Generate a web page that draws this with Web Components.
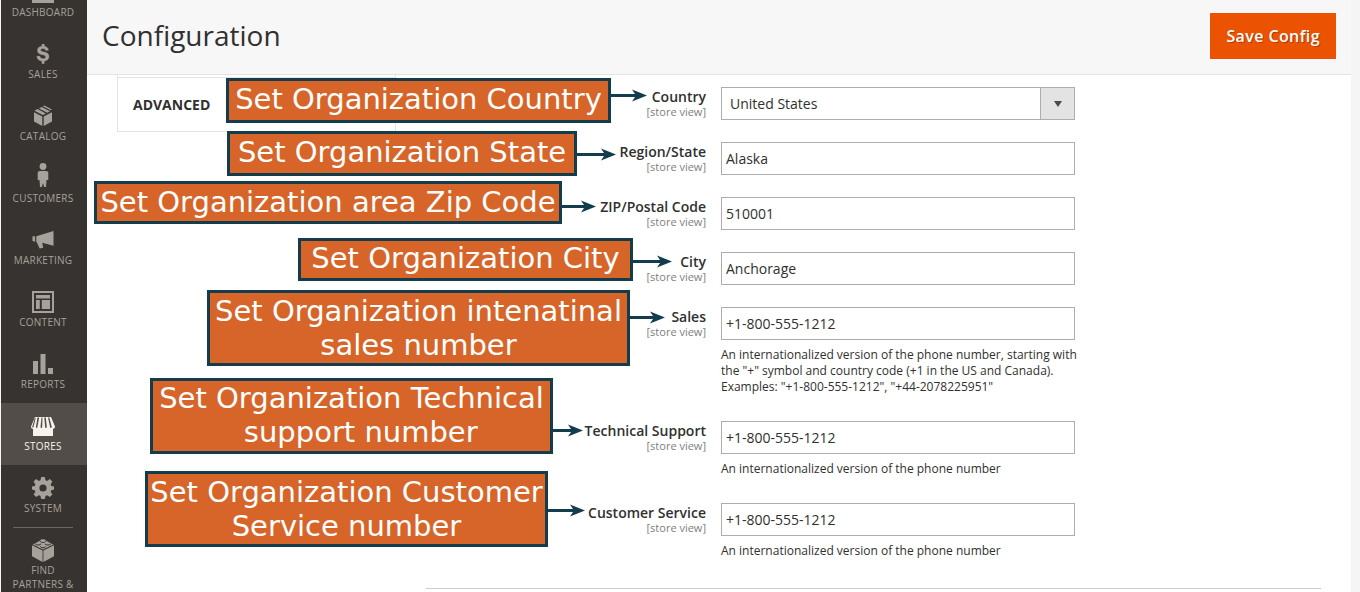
<!DOCTYPE html>
<html lang="en">
<head>
<meta charset="utf-8">
<meta name="viewport" content="width=device-width, initial-scale=1">
<title>Configuration</title>
<style>
  body { margin: 0; height: 100vh; overflow: hidden; background: #f5f5f5; color: #303030; font-family: "Open Sans", sans-serif; font-size: 14px; }
</style>
</head>
<body>
<config-page></config-page>
<script>
const define = (name, html, setup) => {
  const template = document.createElement('template');
  template.innerHTML = html;
  customElements.define(name, class extends HTMLElement {
    connectedCallback() {
      if (this.shadowRoot) return;
      const root = this.attachShadow({ mode: 'open' });
      root.append(template.content.cloneNode(true));
      if (setup) setup(this, root);
    }
  });
};

const icons = {
  dashboard: '<svg width="22" height="22"><path d="M0 0h22v22H0z"/></svg>',
  sales: '<svg width="14" height="20" viewBox="0 0 14 20"><path stroke="currentColor" stroke-width=".5" d="M6 0h2.200v2.300c2.400.3 3.900 1.600 4.200 3.900H9.500C9.200 5 8.400 4.500 7 4.500c-1.500 0-2.400.5-2.400 1.500 0 1.200 1.300 1.500 3.400 2 2.700.7 4.900 1.500 4.900 4.400 0 2.600-1.800 4.200-4.700 4.600v2.500H6V17C3 16.700 1.100 15.200.9 12.300h3c.2 1.700 1.300 2.400 3.200 2.400 1.700 0 2.700-.7 2.700-1.800 0-1.300-1.200-1.700-3.400-2.200C3.600 10 1.500 9.100 1.500 6.400 1.500 4.100 3.200 2.600 6 2.300z"/></svg>',
  catalog: '<svg width="20" height="22" viewBox="0 0 20 22"><path d="M1 7.200l8.300 4.300V21L1 16.500zM10.700 11.500L19 7.200v9.300L10.700 21zM1.500 5.800l3-1.700 8.300 4.300-2.900 1.600zM6 3.400l2.600-1.500 8.400 4.300-2.700 1.500zM9.800 1.300L11.500.4 18.900 4.400l-1.200.9z"/></svg>',
  customers: '<svg width="12" height="30" viewBox="0 0 12 30"><circle cx="6" cy="3.500" r="3.400"/><path d="M3 8h6c1.500 0 2.300.8 2.300 2.200V17H9.500L9 24H7.200L6 20l-1.200 4H3l-.5-7H.7v-6.800C.7 8.800 1.500 8 3 8z"/></svg>',
  marketing: '<svg width="22" height="18" viewBox="0 0 22 18"><path d="M21.500 0v14.800L10.200 11.800l1 5-3.600.8-2.800-6.400H4.300V5.300zM.5 5.200h2.600v5.600L.5 10z"/></svg>',
  content: '<svg width="22" height="22" viewBox="0 0 22 22"><path fill-rule="evenodd" d="M0 0h22v22H0zM2 2v18h18V2zM4 4h14v3.500H4zM4 9h3.800v9H4zM9.800 9H18v9H9.800z"/></svg>',
  reports: '<svg width="20" height="22" viewBox="0 0 20 22"><path d="M0 8h5v13H0zM7.500 1h5v20h-5zM15 15h5v6h-5z"/></svg>',
  stores: '<svg width="24" height="20" viewBox="0 0 24 20"><path d="M4 1h16l4 9.500c0 1.500-.8 2.300-2 2.300V20H2v-7.200c-1.200 0-2-.8-2-2.300z"/><path fill="#524d49" d="M6.500 1.500h1.700L6.400 11c-.1 1.200-1.200 1.200-1.500 0zM10.500 1.500h1l-.3 9.500c-.2 1.200-1.500 1.200-1.700 0zM13.300 1.500h1.500L15.800 11c-.1 1.200-1.500 1.200-1.700 0zM17 1.500h1.300l2.500 9.500c-.3 1.200-1.500 1.200-1.800 0zM3.500 3l1.400-1.500L2.500 11c-.2.800-1 .8-1.300 0z"/></svg>',
  system: '<svg width="22" height="22" viewBox="-11 -11 22 22"><path fill-rule="evenodd" d="M-1.800-11h3.600l.7 3.200 1.600.7 2.800-1.800 2.500 2.500-1.800 2.800.7 1.600 2.700.6v3l-2.700.6-.7 1.600 1.800 2.800-2.500 2.500-2.800-1.800-1.600.7-.7 3h-3.600l-.7-3-1.600-.7-2.800 1.800-2.500-2.500 1.800-2.800-.7-1.600-2.700-.6v-3l2.700-.6.7-1.600-1.800-2.800 2.500-2.500 2.800 1.800 1.600-.7zM3.600 0a3.600 3.600 0 1 0-7.200 0 3.600 3.600 0 1 0 7.200 0z"/></svg>',
  partners: '<svg width="22" height="23" viewBox="0 0 22 23"><path d="M0 6.300l10.600 5.200V23L0 17.300zM11.400 11.500L22 6.300v11L11.400 23z"/><path d="M.8 5.500L8 1.800h6l7.200 3.700L11 10.600z"/><path fill="none" stroke="#373330" stroke-width="1" d="M8.200 2.300c.4 1.500 5.200 1.500 5.600 0M3.200 4.800c.4 1.600 5.400 1.600 5.800 0M13 4.800c.4 1.600 5.400 1.600 5.800 0M8.200 7.500c.4 1.600 5.200 1.600 5.600 0"/><path d="M8.200 1.600a2.800 1.400 0 0 1 5.600 0 2.800 1.400 0 0 1-5.600 0z"/></svg>'
};

define('menu-item', `
<style>
  :host { display: block; min-height: 62px; color: #a6a19a; }
  :host([active]) { background: #524d49; color: #f7f3eb; }
  a { display: block; padding: 10px 9px 0 7px; color: inherit; text-decoration: none; text-align: center; text-transform: uppercase; font-size: 10px; line-height: 14px; letter-spacing: 0.025em; }
  .icon { display: flex; height: 26px; align-items: center; justify-content: center; }
  svg { fill: currentColor; }
</style>
<a href="#"><span class="icon"></span><slot></slot></a>`, (host, root) => {
  root.querySelector('.icon').innerHTML = icons[host.getAttribute('icon')];
  if (host.hasAttribute('active')) root.querySelector('a').setAttribute('aria-current', 'page');
});

define('side-menu', `
<style>
  :host { display: block; background: #373330; overflow: hidden; }
  nav { display: flex; flex-direction: column; margin-top: -31px; }
  hr { align-self: stretch; margin: 0 14px -1px 12px; border: 0; border-top: 1px solid #6b6662; }
</style>
<nav aria-label="Main">
  <menu-item icon="dashboard">Dashboard</menu-item>
  <menu-item icon="sales">Sales</menu-item>
  <menu-item icon="catalog">Catalog</menu-item>
  <menu-item icon="customers">Customers</menu-item>
  <menu-item icon="marketing">Marketing</menu-item>
  <menu-item icon="content">Content</menu-item>
  <menu-item icon="reports">Reports</menu-item>
  <menu-item icon="stores" active>Stores</menu-item>
  <menu-item icon="system">System</menu-item>
  <hr>
  <menu-item icon="partners">Find Partners &amp;</menu-item>
</nav>`);

define('page-bar', `
<style>
  :host { display: flex; align-items: center; justify-content: space-between; box-sizing: border-box; height: 75px; flex: none; padding: 0 15px 2px; background: #f7f7f7; border-bottom: 1px solid #e3e3e3; }
  h1 { margin: 0 0 2px; font-size: 28px; line-height: 36px; font-weight: 400; color: #303030; }
  button { height: 46px; padding: 0 16px; border: 0; background: #eb5202; color: #fff; font: 600 16px/22px "Open Sans", sans-serif; letter-spacing: 0.025em; text-shadow: 1px 1px 0 rgba(0,0,0,.25); }
</style>
<h1><slot></slot></h1>
<button type="button">Save Config</button>`);

define('section-nav', `
<style>
  :host { display: block; flex: none; width: 279px; box-sizing: border-box; align-self: flex-start; border: 1px solid #e3e3e3; border-top: 0; }
  a { display: block; margin-top: 2px; padding: 17px 15px 16px; border-top: 1px solid #e3e3e3; color: #303030; font-weight: 700; line-height: 20px; text-transform: uppercase; text-decoration: none; }
</style>
<a href="#"><slot></slot></a>`);

/* Annotation box with an arrow that points at a field label.
   --end: distance from the label column's right edge to the arrow tip. */
define('call-out', `
<style>
  :host { position: absolute; z-index: 1; top: var(--top); right: var(--end); display: flex; align-items: flex-start; }
  .box { box-sizing: border-box; width: var(--width); min-height: 43px; padding: 1px 0; border: 3px solid #133c4d; background: #d76529; color: #fff; font: 29px/34px "DejaVu Sans", sans-serif; text-align: center; white-space: nowrap; }
  :host([tall]) .box { padding: 1px 0 4px; }
  :host([raised]) .box { padding: 0 0 2px; }
  svg { display: block; flex: none; width: var(--arrow); height: 11px; margin-top: var(--drop); overflow: visible; }
</style>
<div class="box"><slot></slot></div>
<svg aria-hidden="true"></svg>`, (host, root) => {
  const length = parseInt(host.style.getPropertyValue('--arrow'), 10);
  root.querySelector('svg').innerHTML =
    `<g fill="#133c4d"><path d="M0 4H${length - 9}V7H0z"/><path d="M${length} 5.500L${length - 15} -.5L${length - 11} 5.500L${length - 15} 11.500z"/></g>`;
});

define('config-field', `
<style>
  :host { display: grid; grid-template-columns: 280fr 354fr 231fr; column-gap: 15px; margin-bottom: 22px; }
  .name { position: relative; padding-top: 1px; text-align: right; }
  label { display: block; font-weight: 600; line-height: 18px; white-space: nowrap; }
  .scope { display: block; font-size: 11px; line-height: 12px; color: #808080; }
  .value { position: relative; min-width: 0; }
  input, select { display: block; box-sizing: border-box; width: 100%; height: 33px; margin: 0; padding: 0 4px; border: 1px solid #adadad; border-radius: 0; background: #fff; color: #303030; font: 14px/20px "Open Sans", sans-serif; }
  select { appearance: none; padding: 0 40px 0 8px; background: linear-gradient(to right, #adadad 1px, #e3e3e3 1px) right / 34px 100% no-repeat #fff; }
  .value svg { position: absolute; top: 14px; right: 13px; fill: #514943; pointer-events: none; }
  p { margin: 7px -8px 4px 0; font-size: 12px; line-height: 16px; }
</style>
<div class="name"><label for="control"></label><span class="scope">[store view]</span><slot></slot></div>
<div class="value"></div>`, (host, root) => {
  root.querySelector('label').textContent = host.getAttribute('label');
  const value = root.querySelector('.value');
  const isSelect = host.hasAttribute('select');
  const control = document.createElement(isSelect ? 'select' : 'input');
  control.id = 'control';
  if (isSelect) {
    control.add(new Option(host.getAttribute('value')));
  } else {
    control.type = 'text';
    control.value = host.getAttribute('value');
  }
  value.append(control);
  if (isSelect) value.insertAdjacentHTML('beforeend', '<svg width="8" height="6" aria-hidden="true"><path d="M0 0h8L4 6z"/></svg>');
  if (host.hasAttribute('note')) {
    const note = document.createElement('p');
    note.id = 'note';
    note.textContent = host.getAttribute('note');
    control.setAttribute('aria-describedby', 'note');
    value.append(note);
  }
});

define('config-page', `
<style>
  :host { display: grid; grid-template-columns: 86px minmax(0, 1fr); height: 100vh; padding: 0 9px 0 1px; box-sizing: border-box; }
  main { display: flex; flex-direction: column; min-width: 0; min-height: 0; background: #fff; }
  .content { display: flex; gap: 30px; padding: 0 30px; }
  form { flex: 1; min-width: 0; padding-top: 12px; }
  hr { margin: 25px 0 0; border: 0; border-top: 1px solid #ccc; }
  config-field:last-of-type { margin-bottom: 0; }
</style>
<side-menu></side-menu>
<main>
  <page-bar>Configuration</page-bar>
  <div class="content">
    <section-nav>Advanced</section-nav>
    <form>
      <config-field label="Country" value="United States" select>
        <call-out tall style="--top:-9px; --end:59px; --width:385px; --arrow:36px; --drop:12px">Set Organization Country</call-out>
      </config-field>
      <config-field label="Region/State" value="Alaska">
        <call-out tall style="--top:-11px; --end:90px; --width:350px; --arrow:39px; --drop:18px">Set Organization State</call-out>
      </config-field>
      <config-field label="ZIP/Postal Code" value="510001">
        <call-out style="--top:-16px; --end:110px; --width:468px; --arrow:34px; --drop:20px">Set Organization area Zip Code</call-out>
      </config-field>
      <config-field label="City" value="Anchorage">
        <call-out raised style="--top:-14px; --end:34px; --width:335px; --arrow:39px; --drop:18px">Set Organization City</call-out>
      </config-field>
      <config-field label="Sales" value="+1-800-555-1212" note='An internationalized version of the phone number, starting with the "+" symbol and country code (+1 in the US and Canada). Examples: "+1-800-555-1212", "+44-2078225951"'>
        <call-out style="--top:-17px; --end:41px; --width:423px; --arrow:35px; --drop:22px">Set Organization intenatinal<br>sales number</call-out>
      </config-field>
      <config-field label="Technical Support" value="+1-800-555-1212" note="An internationalized version of the phone number">
        <call-out raised style="--top:-43px; --end:123px; --width:403px; --arrow:30px; --drop:47px">Set Organization Technical<br>&nbsp;&nbsp;support number</call-out>
      </config-field>
      <config-field label="Customer Service" value="+1-800-555-1212" note="An internationalized version of the phone number">
        <call-out style="--top:-32px; --end:121px; --width:403px; --arrow:37px; --drop:34px">Set Organization Customer<br>Service number</call-out>
      </config-field>
      <hr>
    </form>
  </div>
</main>`);
</script>
</body>
</html>
